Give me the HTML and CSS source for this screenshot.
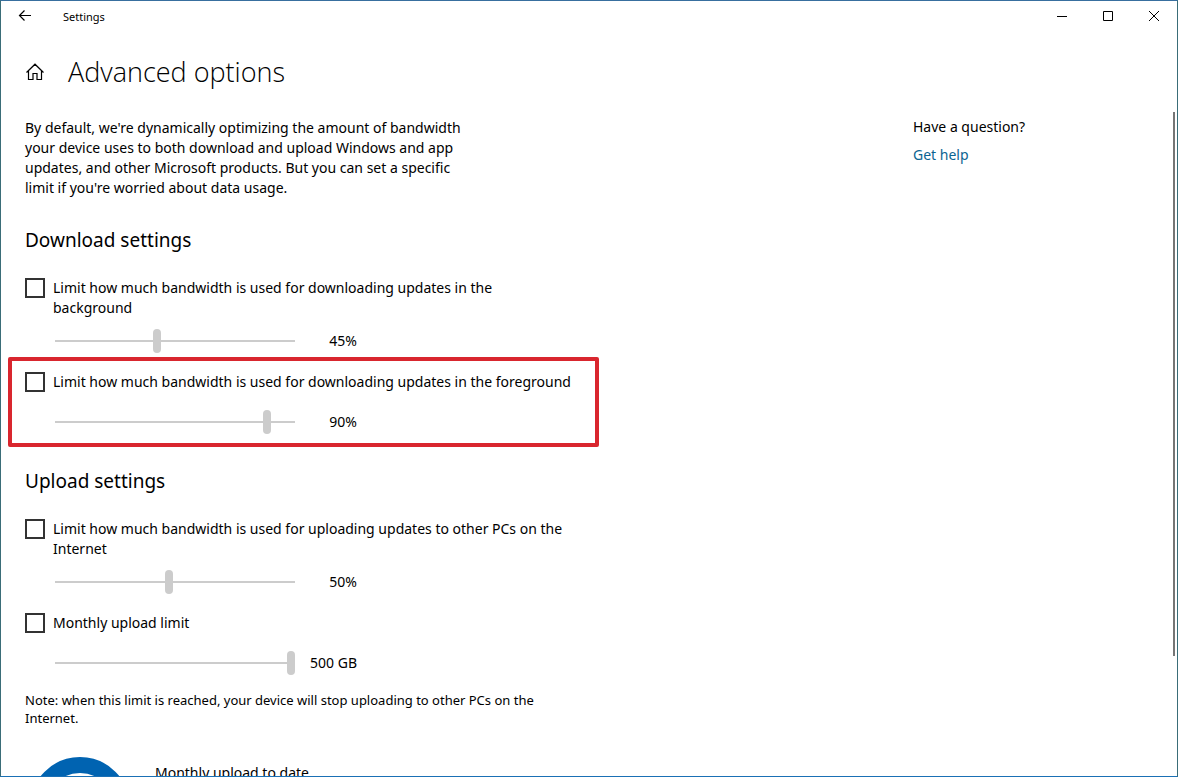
FILE: index.html
```html
<!DOCTYPE html>
<html lang="en">
<head>
<meta charset="utf-8">
<title>Settings</title>
<link rel="stylesheet" href="styles.css">
</head>
<body>
<div class="window">
  <div class="titlebar">
    <button class="back" type="button" aria-label="Back">
      <svg width="14" height="12" viewBox="0 0 14 12" fill="none" stroke="currentColor" stroke-width="1.2"><path d="M13 5.500H1.500M6.500 .5l-5 5 5 5"/></svg>
    </button>
    <span class="app-name">Settings</span>
    <div class="caption-buttons">
      <button type="button" aria-label="Minimize"><svg width="12" height="12" viewBox="0 0 12 12" fill="none" stroke="currentColor"><path d="M1 6.5h10"/></svg></button>
      <button type="button" aria-label="Maximize"><svg width="12" height="12" viewBox="0 0 12 12" fill="none" stroke="currentColor"><path d="M1.5 1.5h9v9h-9z"/></svg></button>
      <button type="button" aria-label="Close"><svg width="12" height="12" viewBox="0 0 12 12" fill="none" stroke="currentColor"><path d="M1 1l10 10M11 1L1 11"/></svg></button>
    </div>
  </div>

  <header class="page-header">
    <button class="home" type="button" aria-label="Home">
      <svg width="20" height="18" viewBox="0 0 20 18" fill="none" stroke="currentColor" stroke-width="1.2"><path d="M1.500 9.500L10 1.200l8.500 8.300M3.500 8v8.500h4.500v-6h4v6h4.500V8"/></svg>
    </button>
    <h1>Advanced options</h1>
  </header>

  <div class="content">
    <main>
      <p class="intro">By default, we're dynamically optimizing the amount of bandwidth your device uses to both download and upload Windows and app updates, and other Microsoft products. But you can set a specific limit if you're worried about data usage.</p>

      <section>
        <h2>Download settings</h2>
        <div class="option">
          <label class="check"><input type="checkbox"><span>Limit how much bandwidth is used for downloading updates in the background</span></label>
          <div class="slider"><input type="range" id="bg" min="5" max="100" value="45" aria-label="Background download bandwidth"><output for="bg">45%</output></div>
        </div>
        <div class="option highlighted">
          <label class="check"><input type="checkbox"><span>Limit how much bandwidth is used for downloading updates in the foreground</span></label>
          <div class="slider"><input type="range" id="fg" min="5" max="100" value="90" aria-label="Foreground download bandwidth"><output for="fg">90%</output></div>
        </div>
      </section>

      <section class="upload">
        <h2>Upload settings</h2>
        <div class="option">
          <label class="check"><input type="checkbox"><span>Limit how much bandwidth is used for uploading updates to other PCs on the Internet</span></label>
          <div class="slider"><input type="range" id="up" min="5" max="100" value="50" aria-label="Upload bandwidth"><output for="up">50%</output></div>
        </div>
        <div class="option">
          <label class="check"><input type="checkbox"><span>Monthly upload limit</span></label>
          <div class="slider"><input type="range" id="cap" min="5" max="500" value="500" aria-label="Monthly upload limit size"><output for="cap">500 GB</output></div>
        </div>
        <p class="note">Note: when this limit is reached, your device will stop uploading to other PCs on the Internet.</p>
        <div class="usage">
          <svg width="100" height="100" viewBox="0 0 100 100" fill="none" stroke="#0063b1" stroke-width="16"><circle cx="50" cy="50" r="42"/></svg>
          <span>Monthly upload to date</span>
        </div>
      </section>
    </main>

    <aside>
      <p>Have a question?</p>
      <a href="#">Get help</a>
    </aside>
    <div class="scroll-thumb"></div>
  </div>
</div>
</body>
</html>
```
FILE: styles.css
```css
* { box-sizing: border-box; }

body {
  margin: 0;
  background: #fff;
  color: #000;
  font: 14px/20px "Noto Sans", "Open Sans", sans-serif;
}

h1, h2, p { margin: 0; font-weight: 400; }

button {
  display: flex;
  align-items: center;
  justify-content: center;
  padding: 0;
  border: 0;
  background: none;
  color: #000;
}

.window {
  display: flex;
  flex-direction: column;
  height: 100vh;
  overflow: hidden;
  border: 1px solid #3a6d78;
  border-top-color: #386f9f;
  border-bottom-color: #1a70b5;
}

.titlebar {
  display: flex;
  align-items: flex-start;
  height: 31px;
  flex: none;
}

.back { width: 48px; height: 30px; }
.app-name { margin-left: 14px; font-size: 11px; line-height: 32px; }
.caption-buttons { display: flex; margin-left: auto; }
.caption-buttons button { width: 46px; height: 30px; }

.page-header {
  display: flex;
  align-items: center;
  gap: 23px;
  flex: none;
  height: 80px;
  padding: 0 24px;
}

.home { width: 20px; height: 20px; }
h1 { font-family: "Open Sans", "Noto Sans", sans-serif; font-size: 27px; font-weight: 300; line-height: 36px; }

.content {
  display: flex;
  flex: 1;
  min-height: 0;
  overflow: hidden;
}

main { flex: 1; padding: 6px 24px 0; }
.intro { max-width: 450px; }
h2 { margin: 28px 0 18px; font-size: 19px; line-height: 28px; }
.upload h2 { margin-top: 33px; }

.option { position: relative; max-width: 548px; }
.option + .option { margin-top: 13px; }

.highlighted::after {
  content: "";
  position: absolute;
  inset: -9px -26px -13px -17px;
  border: 4px solid #d9262e;
  border-radius: 2px;
  pointer-events: none;
}

.check {
  display: flex;
  align-items: flex-start;
  gap: 8px;
  min-height: 33px;
  padding-top: 6px;
}

.check input {
  appearance: none;
  flex: none;
  width: 20px;
  height: 20px;
  margin: 0;
  border: 2px solid #333;
  background: #fff;
}

.slider {
  display: flex;
  align-items: center;
  margin: 11px 0 0 30px;
  height: 24px;
}

.slider input {
  appearance: none;
  width: 240px;
  height: 24px;
  margin: 0;
  background: linear-gradient(#ccc, #ccc) center / 100% 2px no-repeat;
}

.slider input::-webkit-slider-thumb {
  appearance: none;
  width: 8px;
  height: 24px;
  border-radius: 4px;
  background: #ccc;
}

.slider output { width: 62px; text-align: right; }

.note { max-width: 560px; margin-top: 16px; font-size: 13px; line-height: 18px; }

.usage { display: flex; align-items: flex-start; gap: 25px; margin-top: 30px; padding-left: 5px; }
.usage span { margin-top: 6px; }
.usage svg { flex: none; }

aside { width: 260px; padding-top: 5px; }
aside a { display: inline-block; margin-top: 8px; color: #0c6492; text-decoration: none; }

.scroll-thumb { width: 2px; height: 82%; margin-right: 2px; background: #767676; }
```
